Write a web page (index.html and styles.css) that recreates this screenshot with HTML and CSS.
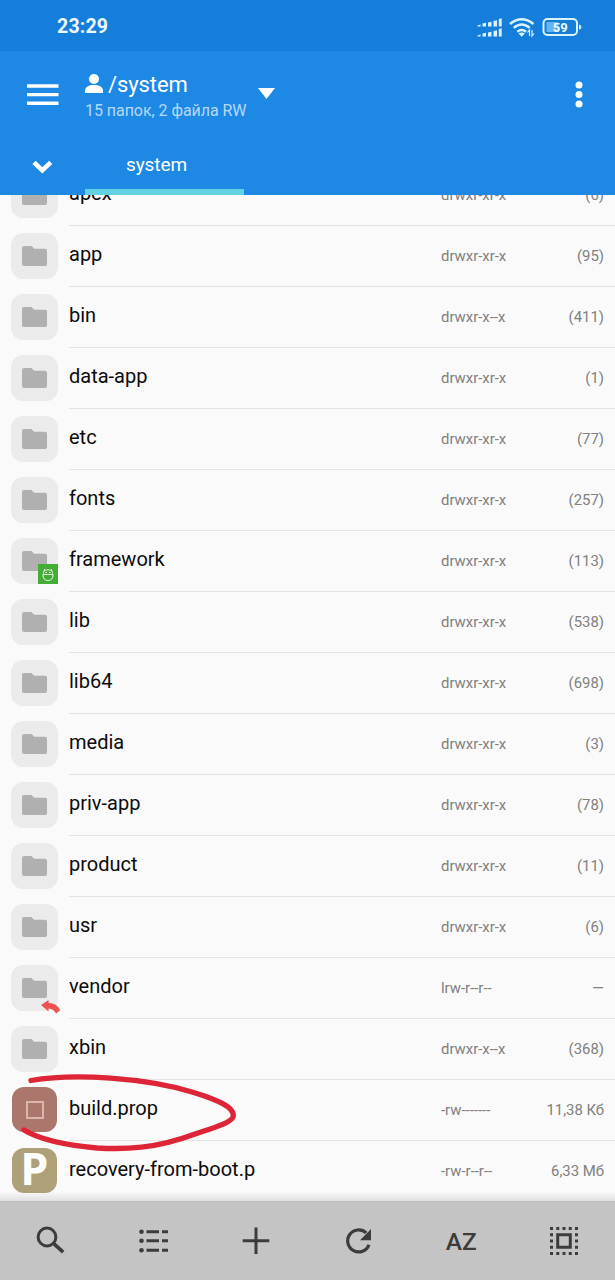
FILE: index.html
```html
<!DOCTYPE html>
<html lang="ru">
<head>
<meta charset="utf-8">
<title>/system</title>
<link rel="stylesheet" href="styles.css">
</head>
<body>
<svg class="defs" aria-hidden="true">
  <symbol id="folder" viewBox="0 0 25 20"><path d="M2 0h7.500l2.700 2.800H23a2 2 0 0 1 2 2V18a2 2 0 0 1-2 2H2a2 2 0 0 1-2-2V2a2 2 0 0 1 2-2z"/></symbol>
</svg>
<div class="screen">
  <div class="status">
    <span class="clock">23:29</span>
    <svg class="indicators" width="108" height="24" viewBox="0 0 108 24">
      <g fill="#d9f3fd">
        <path d="M1.500 11.500l3-1v2h-3zM6.500 9.500l3.500-.8v3.800H6.500zM12 8.500l3.500-.8v4.800H12zM17.500 7l3.500-.8v6.300h-3.500zM22.800 5l2.900-.8v8.300h-2.900z"/>
        <path d="M1.500 21.500l3-1v2h-3zM6.500 19.500l3.500-.8v3.800H6.500zM12 18.500l3.500-.8v4.800H12zM17.500 17l3.500-.8v6.300h-3.500zM22.800 15l2.900-.8v8.300h-2.900z"/>
      </g>
      <g fill="none" stroke="#d9f3fd" stroke-width="2.500">
        <path d="M34 10q11.700-9.500 23.500 0M37.700 13.900q8-6.800 16 0M41.300 17.700q4.400-3.400 8.800 0"/>
      </g>
      <path d="M42.500 19.500q3.200-2 6.400 0l-3.200 3.200z" fill="#d9f3fd"/>
      <path d="M53.500 22v-6l-2 2.500M56 16v6l2-2.500" fill="none" stroke="#d9f3fd" stroke-width="1.200"/>
      <rect x="67.500" y="5" width="33.500" height="16" rx="4" fill="none" stroke="#d9f3fd" stroke-width="2"/>
      <path d="M70.500 8H82v10H70.500z" fill="#64b5f2"/>
      <path d="M103 10.500q2.500.5 2.500 2.500t-2.500 2.500z" fill="#d9f3fd"/>
      <text class="battery" x="84.300" y="17.700" text-anchor="middle">59</text>
    </svg>
  </div>
  <header class="header">
    <div class="toolbar">
      <svg class="menu" width="32" height="22" viewBox="0 0 32 22"><path d="M0 2h31.500M0 10.600h31.500M0 19.200h31.500" stroke="#fff" stroke-width="3.400"/></svg>
      <div class="place">
        <div class="path">
          <svg width="18" height="19" viewBox="0 0 18 19" fill="#fff"><circle cx="9" cy="5" r="5"/><path d="M0 19v-2.500C0 13 4 11 9 11s9 2 9 5.500V19z"/></svg>
          <span class="path-text">/system</span>
        </div>
        <div class="summary">15 папок, 2 файла RW</div>
      </div>
      <svg class="caret" width="17" height="11" viewBox="0 0 17 11"><path d="M0 0h17l-8.500 11z" fill="#fff"/></svg>
      <svg class="more" width="8" height="28" viewBox="0 0 8 28" fill="#fff"><circle cx="4" cy="4" r="3.500"/><circle cx="4" cy="13.500" r="3.500"/><circle cx="4" cy="23" r="3.500"/></svg>
    </div>
    <div class="tabs">
      <svg class="chevron" width="21" height="14" viewBox="0 0 21 14"><path d="M2 2.300l8.300 8L18.700 2.300" fill="none" stroke="#fff" stroke-width="4.600"/></svg>
      <div class="tab">system</div>
    </div>
  </header>
  <main class="list">
    <div class="row"><div class="icon"><svg class="folder"><use href="#folder"/></svg></div><div class="cells"><span class="name">apex</span><span class="perm">drwxr-xr-x</span><span class="size">(6)</span></div></div>
    <div class="row"><div class="icon"><svg class="folder"><use href="#folder"/></svg></div><div class="cells"><span class="name">app</span><span class="perm">drwxr-xr-x</span><span class="size">(95)</span></div></div>
    <div class="row"><div class="icon"><svg class="folder"><use href="#folder"/></svg></div><div class="cells"><span class="name">bin</span><span class="perm">drwxr-x--x</span><span class="size">(411)</span></div></div>
    <div class="row"><div class="icon"><svg class="folder"><use href="#folder"/></svg></div><div class="cells"><span class="name">data-app</span><span class="perm">drwxr-xr-x</span><span class="size">(1)</span></div></div>
    <div class="row"><div class="icon"><svg class="folder"><use href="#folder"/></svg></div><div class="cells"><span class="name">etc</span><span class="perm">drwxr-xr-x</span><span class="size">(77)</span></div></div>
    <div class="row"><div class="icon"><svg class="folder"><use href="#folder"/></svg></div><div class="cells"><span class="name">fonts</span><span class="perm">drwxr-xr-x</span><span class="size">(257)</span></div></div>
    <div class="row"><div class="icon"><svg class="folder"><use href="#folder"/></svg>
      <svg class="badge-android" width="20" height="20" viewBox="0 0 20 20"><path d="M0 0h20v20H0z" fill="#43ad35"/><g fill="none" stroke="#e9f7e6" stroke-width="1"><path d="M6.500 5L5.500 9.500M13.500 5l1 4.500M6.500 6.500q3.500-1.500 7 0M4.500 10.500h11M5 11q0 5.500 5 5.500t5-5.500"/></g><path d="M7.500 8h1.500v1H7.500zM11 8h1.500v1H11z" fill="#fff"/></svg>
    </div><div class="cells"><span class="name">framework</span><span class="perm">drwxr-xr-x</span><span class="size">(113)</span></div></div>
    <div class="row"><div class="icon"><svg class="folder"><use href="#folder"/></svg></div><div class="cells"><span class="name">lib</span><span class="perm">drwxr-xr-x</span><span class="size">(538)</span></div></div>
    <div class="row"><div class="icon"><svg class="folder"><use href="#folder"/></svg></div><div class="cells"><span class="name">lib64</span><span class="perm">drwxr-xr-x</span><span class="size">(698)</span></div></div>
    <div class="row"><div class="icon"><svg class="folder"><use href="#folder"/></svg></div><div class="cells"><span class="name">media</span><span class="perm">drwxr-xr-x</span><span class="size">(3)</span></div></div>
    <div class="row"><div class="icon"><svg class="folder"><use href="#folder"/></svg></div><div class="cells"><span class="name">priv-app</span><span class="perm">drwxr-xr-x</span><span class="size">(78)</span></div></div>
    <div class="row"><div class="icon"><svg class="folder"><use href="#folder"/></svg></div><div class="cells"><span class="name">product</span><span class="perm">drwxr-xr-x</span><span class="size">(11)</span></div></div>
    <div class="row"><div class="icon"><svg class="folder"><use href="#folder"/></svg></div><div class="cells"><span class="name">usr</span><span class="perm">drwxr-xr-x</span><span class="size">(6)</span></div></div>
    <div class="row"><div class="icon"><svg class="folder"><use href="#folder"/></svg>
      <svg class="badge-link" width="20" height="14" viewBox="0 0 20 14"><path d="M0 5L7.500 0v2.800q8.500.5 11.700 7.400l-4 3.300q-3-4.800-7.700-5V11.500z" fill="#ee5150"/></svg>
    </div><div class="cells"><span class="name">vendor</span><span class="perm">lrw-r--r--</span><span class="size">—</span></div></div>
    <div class="row"><div class="icon"><svg class="folder"><use href="#folder"/></svg></div><div class="cells"><span class="name">xbin</span><span class="perm">drwxr-x--x</span><span class="size">(368)</span></div></div>
    <div class="row"><div class="icon icon-prop"><span class="square"></span></div><div class="cells"><span class="name">build.prop</span><span class="perm">-rw-------</span><span class="size">11,38 Кб</span></div></div>
    <div class="row"><div class="icon icon-p">P</div><div class="cells"><span class="name">recovery-from-boot.p</span><span class="perm">-rw-r--r--</span><span class="size">6,33 Мб</span></div></div>
    <div class="fade"></div>
  </main>
  <nav class="bottom">
    <div class="action"><svg width="30" height="30" viewBox="0 0 30 30" fill="none" stroke="#3c3c3c"><circle cx="11" cy="11" r="8.900" stroke-width="3"/><path d="M17.500 17.400l9.700 8.800" stroke-width="3.600"/></svg></div>
    <div class="action"><svg width="30" height="30" viewBox="0 0 30 30" fill="#3c3c3c"><circle cx="2.500" cy="5.700" r="2.300"/><circle cx="2.500" cy="14.800" r="2.300"/><circle cx="2.500" cy="24.300" r="2.300"/><path d="M7.500 4.200H20v3H7.500zM23 4.200h6v3h-6zM7.500 13.300H20v3H7.500zM23 13.300h6v3h-6zM7.500 22.800H20v3H7.500zM23 22.800h6v3h-6z"/></svg></div>
    <div class="action"><svg width="30" height="30" viewBox="0 0 30 30"><path d="M15 1.500V28M1.700 14.800h26.600" stroke="#3c3c3c" stroke-width="3"/></svg></div>
    <div class="action"><svg width="30" height="30" viewBox="0 0 30 30"><path d="M25 18.700a11 11 0 1 1-2.800-11.800" fill="none" stroke="#3c3c3c" stroke-width="3.200"/><path d="M27 3v11.200H16z" fill="#3c3c3c"/></svg></div>
    <div class="action sort">AZ</div>
    <div class="action"><svg width="30" height="30" viewBox="0 0 30 30" fill="none" stroke="#3c3c3c"><path d="M8.700 8.700h12.600v12.600H8.700z" stroke-width="3"/><path d="M1 2.500h28M1 27.500h28" stroke-width="3" stroke-dasharray="3 3.250"/><path d="M2.500 7.250v18M27.500 7.250v18" stroke-width="3" stroke-dasharray="3 3.250"/></svg></div>
  </nav>
  <svg class="marker" width="615" height="110" viewBox="0 1060 615 110"><path d="M31 1080.500C75 1073 145 1078 192 1092C215 1099 236 1107 233 1117C231 1123 213 1128 195 1134C155 1149 125 1149.500 97 1148C65 1145 40 1140 24 1130" fill="none" stroke="#de2538" stroke-width="5.300" stroke-linecap="round" stroke-linejoin="round"/></svg>
</div>
</body>
</html>
```
FILE: styles.css
```css
* { box-sizing: border-box; }
body { margin: 0; font-family: Roboto, "Noto Sans", sans-serif; background: #fafafa; }
.defs { position: absolute; width: 0; height: 0; }
.screen { position: relative; width: 615px; height: 1280px; display: flex; flex-direction: column; overflow: hidden; }
.screen svg { display: block; flex: none; }

.status { height: 51px; flex: none; background: #157edb; display: flex; justify-content: space-between; align-items: center; padding: 2px 31px 0 57px; }
.clock { color: #eefaff; font-size: 19.500px; font-weight: 700; letter-spacing: 0.2px; line-height: 24px; padding-top: 1px; }
.indicators { margin-top: -1px; }
.battery { font: 700 13px Roboto, sans-serif; fill: #effbff; }

.header { height: 144px; flex: none; background: #1e88e5; color: #fff; }
.toolbar { height: 84px; display: flex; padding-left: 27px; }
.menu { margin-top: 33px; }
.place { margin-left: 26px; width: 173px; padding-top: 20px; }
.path { display: flex; gap: 5px; height: 28px; align-items: center; }
.path svg { margin-top: -3px; }
.path-text { font-size: 22px; line-height: 28px; letter-spacing: -0.1px; }
.summary { font-size: 16px; letter-spacing: -0.05px; line-height: 20px; margin-top: 2px; color: #b5d8f6; white-space: nowrap; }
.caret { margin-top: 37px; }
.more { margin: 30px 0 0 300px; }
.tabs { height: 60px; display: flex; padding-left: 32px; }
.chevron { margin-top: 25px; }
.tab { margin-left: 32px; width: 159px; height: 60px; border-bottom: 6px solid #62d1e2; text-align: center; font-size: 19px; letter-spacing: -0.1px; line-height: 60px; padding-right: 16px; }

.list { position: relative; height: 1006px; flex: none; overflow: hidden; background: #fafafa; }
.row { height: 61px; display: flex; padding-left: 11px; align-items: center; }
.row:first-child { margin-top: -30px; }
.icon { position: relative; width: 47px; height: 46px; border-radius: 12px; background: #ebebeb; display: flex; align-items: center; justify-content: center; flex: none; margin-bottom: 1px; }
.folder { width: 25px; height: 20px; fill: #b0b0b0; }
.cells { flex: 1; height: 61px; margin-left: 11px; padding-right: 11px; border-bottom: 1px solid #e4e4e4; display: flex; align-items: center; white-space: nowrap; color: #808080; font-size: 14.900px; }
.name { width: 372px; color: #0c0c0c; font-size: 20px; line-height: 26px; margin-bottom: 4px; }
.perm { flex: 1; }
.badge-android { position: absolute; left: 27px; top: 26px; }
.badge-link { position: absolute; left: 30px; top: 35px; }
.icon-prop { width: 45px; height: 45px; margin: 0 1px 2px; background: #ab766b; }
.square { width: 18px; height: 18px; border: 2px solid #dcb5ae; }
.icon-p { width: 45px; height: 45px; margin: 0 1px 2px; background: #aea078; color: #fff; font: 700 45px/45px "Open Sans", "Noto Sans", sans-serif; padding-bottom: 6px; }
.fade { position: absolute; left: 0; right: 0; bottom: 0; height: 10px; background: linear-gradient(rgba(0,0,0,0), rgba(0,0,0,.1)); }

.bottom { height: 79px; flex: none; background: #c4c4c4; display: flex; border-top: 1px solid #bdbdbd; }
.action { flex: 1; display: flex; align-items: center; justify-content: center; }
.sort { color: #3c3c3c; font-size: 24.500px; font-weight: 500; }
.marker { position: absolute; left: 0; top: 1060px; }
```
